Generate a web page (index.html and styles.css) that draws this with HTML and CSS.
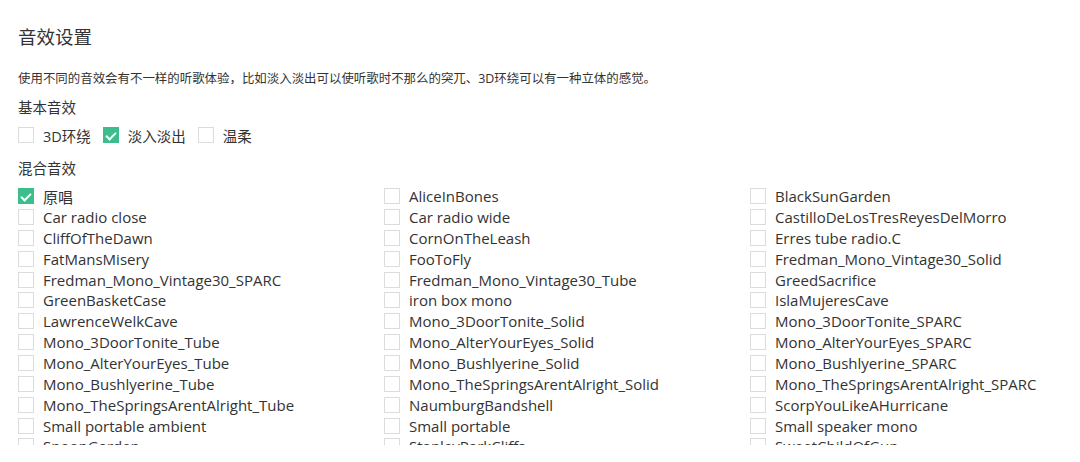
FILE: index.html
```html
<!DOCTYPE html>
<html lang="zh-CN">
<head>
<meta charset="utf-8">
<title>音效设置</title>
<link rel="stylesheet" href="styles.css">
</head>
<body>
<div class="page">
  <h1 class="title">音效设置</h1>
  <p class="desc">使用不同的音效会有不一样的听歌体验，比如淡入淡出可以使听歌时不那么的突兀、3D环绕可以有一种立体的感觉。</p>
  <h2 class="sub">基本音效</h2>
  <div class="basic">
    <label class="opt"><span class="box"></span><span class="txt">3D环绕</span></label>
    <label class="opt"><span class="box on"></span><span class="txt">淡入淡出</span></label>
    <label class="opt"><span class="box"></span><span class="txt">温柔</span></label>
  </div>
  <h2 class="sub sub2">混合音效</h2>
  <div class="listwrap">
    <div class="grid">
      <label class="opt"><span class="box on"></span><span class="txt">原唱</span></label>
      <label class="opt"><span class="box"></span><span class="txt">AliceInBones</span></label>
      <label class="opt"><span class="box"></span><span class="txt">BlackSunGarden</span></label>
      <label class="opt"><span class="box"></span><span class="txt">Car radio close</span></label>
      <label class="opt"><span class="box"></span><span class="txt">Car radio wide</span></label>
      <label class="opt"><span class="box"></span><span class="txt">CastilloDeLosTresReyesDelMorro</span></label>
      <label class="opt"><span class="box"></span><span class="txt">CliffOfTheDawn</span></label>
      <label class="opt"><span class="box"></span><span class="txt">CornOnTheLeash</span></label>
      <label class="opt"><span class="box"></span><span class="txt">Erres tube radio.C</span></label>
      <label class="opt"><span class="box"></span><span class="txt">FatMansMisery</span></label>
      <label class="opt"><span class="box"></span><span class="txt">FooToFly</span></label>
      <label class="opt"><span class="box"></span><span class="txt">Fredman_Mono_Vintage30_Solid</span></label>
      <label class="opt"><span class="box"></span><span class="txt">Fredman_Mono_Vintage30_SPARC</span></label>
      <label class="opt"><span class="box"></span><span class="txt">Fredman_Mono_Vintage30_Tube</span></label>
      <label class="opt"><span class="box"></span><span class="txt">GreedSacrifice</span></label>
      <label class="opt"><span class="box"></span><span class="txt">GreenBasketCase</span></label>
      <label class="opt"><span class="box"></span><span class="txt">iron box mono</span></label>
      <label class="opt"><span class="box"></span><span class="txt">IslaMujeresCave</span></label>
      <label class="opt"><span class="box"></span><span class="txt">LawrenceWelkCave</span></label>
      <label class="opt"><span class="box"></span><span class="txt">Mono_3DoorTonite_Solid</span></label>
      <label class="opt"><span class="box"></span><span class="txt">Mono_3DoorTonite_SPARC</span></label>
      <label class="opt"><span class="box"></span><span class="txt">Mono_3DoorTonite_Tube</span></label>
      <label class="opt"><span class="box"></span><span class="txt">Mono_AlterYourEyes_Solid</span></label>
      <label class="opt"><span class="box"></span><span class="txt">Mono_AlterYourEyes_SPARC</span></label>
      <label class="opt"><span class="box"></span><span class="txt">Mono_AlterYourEyes_Tube</span></label>
      <label class="opt"><span class="box"></span><span class="txt">Mono_Bushlyerine_Solid</span></label>
      <label class="opt"><span class="box"></span><span class="txt">Mono_Bushlyerine_SPARC</span></label>
      <label class="opt"><span class="box"></span><span class="txt">Mono_Bushlyerine_Tube</span></label>
      <label class="opt"><span class="box"></span><span class="txt">Mono_TheSpringsArentAlright_Solid</span></label>
      <label class="opt"><span class="box"></span><span class="txt">Mono_TheSpringsArentAlright_SPARC</span></label>
      <label class="opt"><span class="box"></span><span class="txt">Mono_TheSpringsArentAlright_Tube</span></label>
      <label class="opt"><span class="box"></span><span class="txt">NaumburgBandshell</span></label>
      <label class="opt"><span class="box"></span><span class="txt">ScorpYouLikeAHurricane</span></label>
      <label class="opt"><span class="box"></span><span class="txt">Small portable ambient</span></label>
      <label class="opt"><span class="box"></span><span class="txt">Small portable</span></label>
      <label class="opt"><span class="box"></span><span class="txt">Small speaker mono</span></label>
      <label class="opt"><span class="box"></span><span class="txt">SpoonGarden</span></label>
      <label class="opt"><span class="box"></span><span class="txt">StanleyParkCliffs</span></label>
      <label class="opt"><span class="box"></span><span class="txt">SweetChildOfGun</span></label>
    </div>
  </div>
</div>
</body>
</html>
```

FILE: styles.css
```css
html, body {
  margin: 0;
  padding: 0;
  background: #ffffff;
  overflow: hidden;
}
body {
  width: 1080px;
  height: 462px;
  font-family: "Open Sans", "Noto Sans CJK SC", sans-serif;
  color: #333333;
}
.page {
  padding: 24px 0 0 18px;
}
.title {
  margin: 0;
  font-size: 18.5px;
  font-weight: normal;
  line-height: 26px;
  color: #333;
}
.desc {
  margin: 21px 0 0;
  font-size: 12.45px;
  line-height: 16px;
  color: #333;
}
.sub {
  margin: 11px 0 0;
  font-size: 14.5px;
  font-weight: normal;
  line-height: 20px;
}
.sub2 {
  margin-top: 13px;
}
.basic {
  display: flex;
  gap: 12px;
  margin-top: 7px;
}
.opt {
  display: flex;
  align-items: center;
  height: 20.85px;
  font-size: 15px;
  white-space: nowrap;
}
.basic .opt {
  font-size: 14.5px;
}
.box {
  box-sizing: border-box;
  width: 16px;
  height: 16px;
  border: 1px solid #dcdcdc;
  background: #fff;
  margin-right: 9px;
  flex: none;
  position: relative;
}
.box.on {
  background: #3dbd8c;
  border-color: #3dbd8c;
}
.box.on::after {
  content: "";
  position: absolute;
  left: 4px;
  top: 2px;
  width: 4px;
  height: 8px;
  border-right: 2px solid #fff;
  border-bottom: 2px solid #fff;
  transform: rotate(45deg);
}
.listwrap {
  margin-top: 7px;
  height: 259.5px;
  overflow: hidden;
}
.grid {
  display: grid;
  grid-template-columns: repeat(3, 366px);
}
```
